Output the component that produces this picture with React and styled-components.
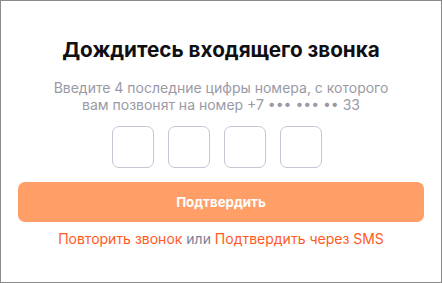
import React from "react";
import styled, { createGlobalStyle } from "styled-components";

const Global = createGlobalStyle`
  html, body { margin: 0; padding: 0; background: #fff; }
  body { font-family: Inter, "Noto Sans", sans-serif; }
  * { box-sizing: border-box; }
`;

const Frame = styled.div`
  width: 442px;
  height: 283px;
  border: 1px solid #8a8a8a;
  display: flex;
  flex-direction: column;
  align-items: center;
  padding: 37px 17px 0;
  background: #fff;
`;

const Title = styled.h1`
  margin: 0;
  font-size: 20.7px;
  line-height: 24px;
  font-weight: 700;
  color: #101014;
  white-space: nowrap;
`;

const Hint = styled.p`
  margin: 17px 0 0;
  font-size: 14px;
  line-height: 17px;
  color: #9a9aa6;
  text-align: center;
  white-space: nowrap;
`;

const Codes = styled.div`
  display: flex;
  gap: 14px;
  margin-top: 13px;
  padding-right: 8px;
`;

const CodeBox = styled.div`
  width: 42px;
  height: 42px;
  border: 1px solid #c4c6d4;
  border-radius: 7px;
`;

const Button = styled.button`
  margin-top: 14px;
  width: 406px;
  height: 40px;
  border: none;
  border-radius: 7px;
  background: #ff9e66;
  color: #fff;
  font-family: inherit;
  font-size: 13.3px;
  font-weight: 700;
`;

const Links = styled.div`
  margin-top: 8px;
  font-size: 14px;
  line-height: 17px;
  color: #7d8198;
  white-space: nowrap;
`;

const Link = styled.span`
  color: #ff5a1e;
`;

export default function App() {
  return (
    <>
      <Global />
      <Frame>
        <Title>Дождитесь входящего звонка</Title>
        <Hint>
          Введите 4 последние цифры номера, с которого
          <br />
          вам позвонят на номер +7 ••• ••• •• 33
        </Hint>
        <Codes>
          <CodeBox />
          <CodeBox />
          <CodeBox />
          <CodeBox />
        </Codes>
        <Button>Подтвердить</Button>
        <Links>
          <Link>Повторить звонок</Link> или <Link>Подтвердить через SMS</Link>
        </Links>
      </Frame>
    </>
  );
}
